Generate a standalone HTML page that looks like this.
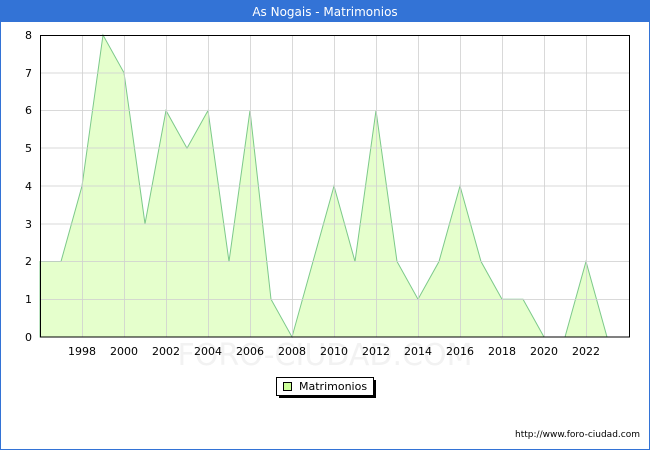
<!DOCTYPE html>
<html><head><style>
body{margin:0;width:650px;height:450px;overflow:hidden;font-family:"DejaVu Sans","Liberation Sans",sans-serif;}
</style></head><body>
<svg width="650" height="450" xmlns="http://www.w3.org/2000/svg" font-family="DejaVu Sans, Liberation Sans, sans-serif">
<rect x="0" y="0" width="650" height="450" fill="#fff"/>
<rect x="0.5" y="0.5" width="649" height="449" fill="none" stroke="#3373d6"/>
<rect x="0" y="0" width="650" height="22" fill="#3373d6"/>
<text x="325" y="16" fill="#fff" font-size="12" text-anchor="middle">As Nogais - Matrimonios</text>
<text x="325" y="365" fill="#f2f2f2" font-size="30" text-anchor="middle">FORO-CIUDAD.COM</text>
<polygon fill="#e5ffcc" stroke="#7cc98a" stroke-width="1" points="40,337 40,261.5 61,261.5 82,186 103,35 124,72.75 145,223.75 166,110.5 187,148.25 208,110.5 229,261.5 250,110.5 271,299.25 292,337 313,261.5 334,186 355,261.5 376,110.5 397,261.5 418,299.25 439,261.5 460,186 481,261.5 502,299.25 523,299.25 544,337 565,337 586,261.5 607,337"/>
<g stroke="#d0d0d0" stroke-width="1" stroke-opacity="0.8">
<line x1="40" x2="630" y1="299.5" y2="299.5"/><line x1="40" x2="630" y1="261.5" y2="261.5"/>
<line x1="40" x2="630" y1="224" y2="224"/><line x1="40" x2="630" y1="186" y2="186"/>
<line x1="40" x2="630" y1="148" y2="148"/><line x1="40" x2="630" y1="110.5" y2="110.5"/>
<line x1="40" x2="630" y1="73" y2="73"/>
<line x1="82.5" x2="82.5" y1="35" y2="337"/><line x1="124.5" x2="124.5" y1="35" y2="337"/>
<line x1="166.5" x2="166.5" y1="35" y2="337"/><line x1="208.5" x2="208.5" y1="35" y2="337"/>
<line x1="250.5" x2="250.5" y1="35" y2="337"/><line x1="292.5" x2="292.5" y1="35" y2="337"/>
<line x1="334.5" x2="334.5" y1="35" y2="337"/><line x1="376.5" x2="376.5" y1="35" y2="337"/>
<line x1="418.5" x2="418.5" y1="35" y2="337"/><line x1="460.5" x2="460.5" y1="35" y2="337"/>
<line x1="502.5" x2="502.5" y1="35" y2="337"/><line x1="544.5" x2="544.5" y1="35" y2="337"/>
<line x1="586.5" x2="586.5" y1="35" y2="337"/>
</g>
<rect x="40.5" y="35.5" width="589" height="301.5" fill="none" stroke="#000"/>
<g font-size="11" fill="#000" text-anchor="end">
<text x="32" y="341">0</text><text x="32" y="303">1</text><text x="32" y="265">2</text>
<text x="32" y="228">3</text><text x="32" y="190">4</text><text x="32" y="152">5</text>
<text x="32" y="114">6</text><text x="32" y="77">7</text><text x="32" y="39">8</text>
</g>
<g font-size="11" fill="#000" text-anchor="middle">
<text x="82" y="355">1998</text><text x="124" y="355">2000</text><text x="166" y="355">2002</text>
<text x="208" y="355">2004</text><text x="250" y="355">2006</text><text x="292" y="355">2008</text>
<text x="334" y="355">2010</text><text x="376" y="355">2012</text><text x="418" y="355">2014</text>
<text x="460" y="355">2016</text><text x="502" y="355">2018</text><text x="544" y="355">2020</text>
<text x="586" y="355">2022</text>
</g>
<rect x="279" y="380" width="97" height="18" fill="#000"/>
<rect x="276.5" y="377.5" width="97" height="18" fill="#fff" stroke="#000"/>
<rect x="283.5" y="382.5" width="8" height="8" fill="#ccff99" stroke="#000"/>
<text x="299" y="390" font-size="11">Matrimonios</text>
<text x="640" y="437" font-size="9" text-anchor="end">http://www.foro-ciudad.com</text>
</svg>
</body></html>
